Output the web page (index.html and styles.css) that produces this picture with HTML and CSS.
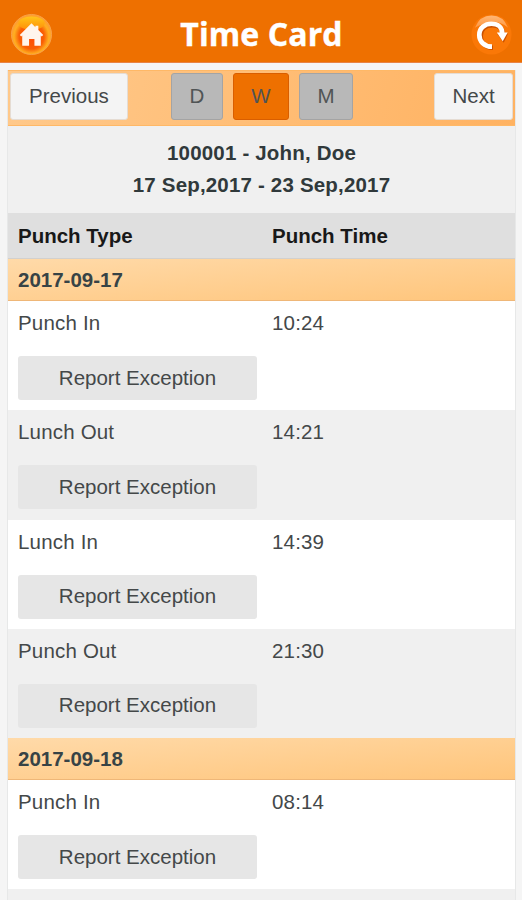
FILE: index.html
```html
<!DOCTYPE html>
<html lang="en">
<head>
<meta charset="utf-8">
<title>Time Card</title>
<link rel="stylesheet" href="styles.css">
</head>
<body>
<header class="topbar">
  <svg class="icon" viewBox="0 0 44 44" role="img" aria-label="Home">
    <defs>
      <radialGradient id="orb" cx="50%" cy="55%" r="50%"><stop offset="0" stop-color="#ff4a08"/><stop offset=".62" stop-color="#fa5f04"/><stop offset=".87" stop-color="#ffae20"/><stop offset="1" stop-color="#ffa02c"/></radialGradient>
      <linearGradient id="gloss" x2="0" y2="1"><stop offset="0" stop-color="#ffc51a"/><stop offset="1" stop-color="#ff8d08"/></linearGradient>
    </defs>
    <circle cx="22" cy="22" r="20.5" fill="url(#orb)" stroke="#f9a147"/>
    <ellipse cx="22" cy="10.500" rx="13.5" ry="7" fill="url(#gloss)"/>
    <path d="M10 22.500 22 10.500l4 4V13h3v4.500l5 5-1.500 1.500-1-1V33.500h-6.500v-7h-5.500v7H12.500V23l-1 1z" fill="#fff5ed"/>
  </svg>
  <h1 class="title">Time Card</h1>
  <svg class="icon" viewBox="0 0 44 44" role="img" aria-label="Refresh">
    <defs><linearGradient id="shine" x2="0" y2="1"><stop offset="0" stop-color="#ffb777"/><stop offset="1" stop-color="#ff9840"/></linearGradient></defs>
    <circle cx="22" cy="22" r="20.500" fill="#fa7807"/>
    <path d="M5 15Q10 2.500 22 2.500T39 15Q30 8 22 9T5 15z" fill="url(#shine)"/>
    <path d="M23 34.500C14.500 34.500 10.500 29 10.500 22.500 10.500 15 16 11.500 22.500 11.500c7 0 11 4 11 10" transform="translate(.5 1)" fill="none" stroke="#c95000" stroke-width="4.500"/>
    <path d="m28 21.500 11-.5-4.500 9.500z" fill="#c95000"/>
    <path d="M22.500 34.500C14.500 34.500 9.500 29 9.500 22.500 9.500 15 15.500 11 22 11c7 0 11 4 11 10" fill="none" stroke="#fff" stroke-width="4.800"/>
    <path d="M27.500 20h11L33.500 29z" fill="#fff"/>
  </svg>
</header>
<main class="page">
  <nav class="toolbar">
    <button class="btn prev">Previous</button>
    <div class="modes"><button class="btn mode">D</button><button class="btn mode active">W</button><button class="btn mode">M</button></div>
    <button class="btn next">Next</button>
  </nav>
  <section class="summary"><div>100001 - John, Doe</div><div>17 Sep,2017 - 23 Sep,2017</div></section>
  <div class="columns"><span>Punch Type</span><span>Punch Time</span></div>
  <h2 class="date">2017-09-17</h2>
  <section class="punch"><span>Punch In</span><span>10:24</span><button class="report">Report Exception</button></section>
  <section class="punch alt"><span>Lunch Out</span><span>14:21</span><button class="report">Report Exception</button></section>
  <section class="punch"><span>Lunch In</span><span>14:39</span><button class="report">Report Exception</button></section>
  <section class="punch alt"><span>Punch Out</span><span>21:30</span><button class="report">Report Exception</button></section>
  <h2 class="date">2017-09-18</h2>
  <section class="punch"><span>Punch In</span><span>08:14</span><button class="report">Report Exception</button></section>
</main>
</body>
</html>
```
FILE: styles.css
```css
* { box-sizing: border-box; }
body {
  margin: 0;
  height: 900px;
  overflow: hidden;
  display: flex;
  flex-direction: column;
  background: #f5f5f5;
  color: #444849;
  font: 20.5px/24px "Liberation Sans", Arial, sans-serif;
  letter-spacing: .18px;
}
button {
  font: inherit;
  letter-spacing: 0;
  color: inherit;
  padding: 0 0 1px;
  border: 0;
}
.topbar {
  flex: none;
  height: 63px;
  display: flex;
  justify-content: space-between;
  align-items: center;
  padding: 7px 9px 0 10px;
  background: #ee7000;
  border-bottom: 1px solid #e88345;
}
.icon { width: 43px; height: 43px; }
.title {
  margin: 0 0 1px;
  color: #fff;
  font: bold 32px/40px "Open Sans", "Noto Sans", sans-serif;
  letter-spacing: .1px;
  -webkit-text-stroke: .4px #fff;
}
.page {
  width: 509px;
  margin: 7px 0 0 7px;
  flex: 1;
  background: #f0f0f0;
  border: solid #e7e8e8;
  border-width: 0 1px;
}
.toolbar {
  height: 56px;
  padding: 2px 2px 5px;
  display: grid;
  grid-template-columns: 118px 182px 79px;
  column-gap: 43px;
  background: linear-gradient(105deg, #ffc98b, #ffb261);
  border: solid #ffb866;
  border-width: 1px 0;
}
.btn { border-radius: 3px; background: #f4f4f4; border: 1px solid #e5dcd3; }
.modes { display: grid; grid-template-columns: 52px 56px 54px; gap: 10px; }
.next { margin-left: 38px; width: 79px; }
.mode { background: #b8b8b8; border-color: #a4a4a4; color: #505455; }
.active { background: #ee7000; border-color: #d95e00; }
.summary {
  height: 87px;
  padding-top: 11px;
  text-align: center;
  font-weight: bold;
  line-height: 32px;
  color: #30393b;
}
.columns {
  height: 46px;
  padding: 0 10px;
  display: grid;
  grid-template-columns: 254px 1fr;
  align-items: center;
  background: #dfdfdf;
  border-bottom: 1px solid #d2d0cd;
  color: #181818;
  font-weight: bold;
  letter-spacing: 0;
}
.date {
  height: 42px;
  margin: 0;
  padding: 0 10px;
  font: bold 20.5px/42px "Liberation Sans", Arial, sans-serif;
  letter-spacing: 0;
  color: #374346;
  background: linear-gradient(175deg, #ffdaa9, #ffc57b);
  border-bottom: 1px solid #efb778;
}
.punch {
  height: 109.25px;
  padding: 10px 10px 0;
  display: grid;
  grid-template-columns: 239px 1fr;
  grid-template-rows: 24px 44px;
  column-gap: 15px;
  row-gap: 21px;
  background: #fff;
}
.alt { background: #f0f0f0; }
.report { background: #e6e6e6; border-radius: 3px; }
```
